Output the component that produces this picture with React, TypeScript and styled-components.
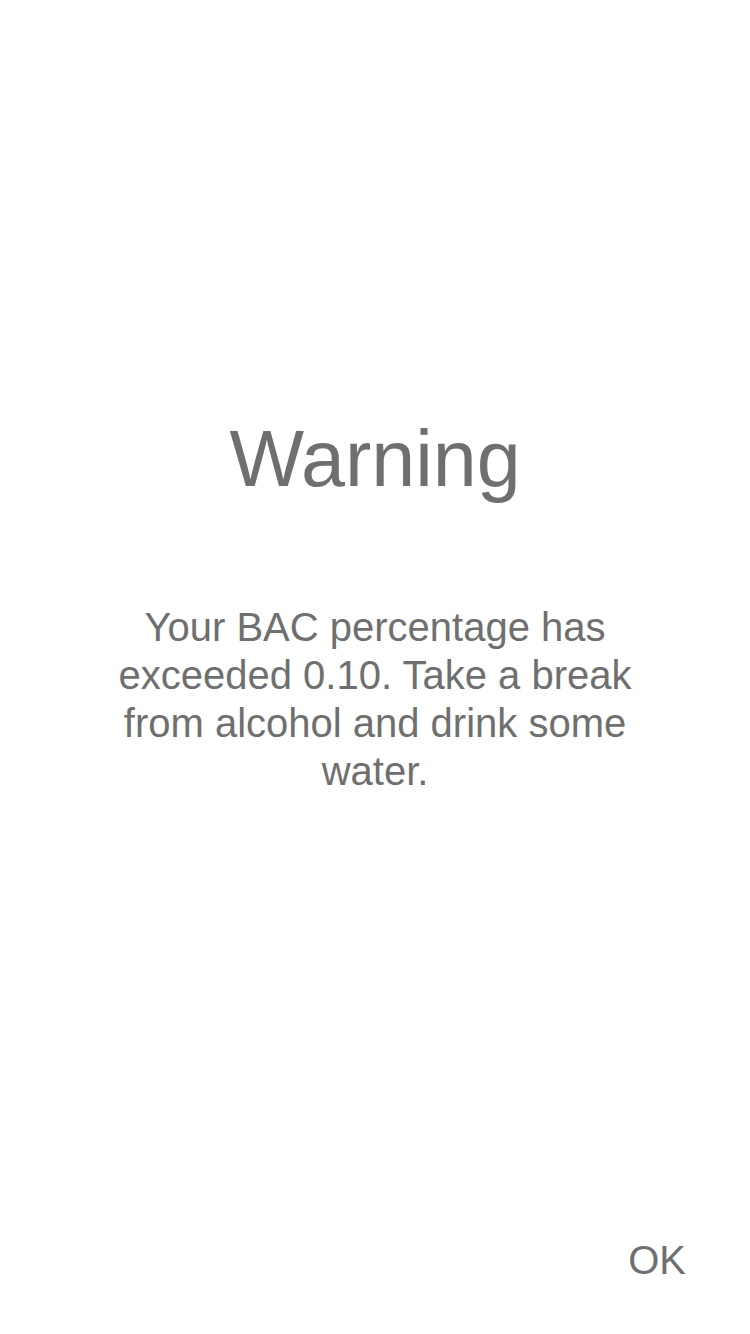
import * as React from 'react';
import styled, { createGlobalStyle } from 'styled-components';

const GlobalStyle = createGlobalStyle`
    html,
    body {
        margin: 0;
        padding: 0;
        background: #ffffff;
    }

    body {
        font-family: 'Liberation Sans', Arial, Helvetica, sans-serif;
        -webkit-font-smoothing: antialiased;
    }
`;

const Screen = styled.div`
    display: flex;
    flex-direction: column;
    width: 750px;
    height: 1334px;
    background: #ffffff;
    color: #6f6f6f;
`;

const Content = styled.main`
    flex: 1;
    display: flex;
    flex-direction: column;
    align-items: center;
    padding-top: 414px;
`;

const Title = styled.h1`
    margin: 0;
    font-size: 79px;
    line-height: 90px;
    font-weight: 400;
`;

const Message = styled.p`
    margin: 99px 0 0;
    max-width: 535px;
    font-size: 40px;
    line-height: 48px;
    text-align: center;
`;

const Footer = styled.footer`
    display: flex;
    justify-content: flex-end;
    padding: 0 64px 50px;
`;

const OkButton = styled.button`
    border: none;
    background: none;
    padding: 0;
    font-family: inherit;
    font-size: 40px;
    line-height: 48px;
    color: #6f6f6f;
    cursor: pointer;
`;

export const App: React.FunctionComponent = () => {
    return (
        <>
            <GlobalStyle />
            <Screen>
                <Content>
                    <Title>Warning</Title>
                    <Message>
                        Your BAC percentage has exceeded 0.10. Take a break from alcohol and drink some water.
                    </Message>
                </Content>
                <Footer>
                    <OkButton>OK</OkButton>
                </Footer>
            </Screen>
        </>
    );
};

export default App;
